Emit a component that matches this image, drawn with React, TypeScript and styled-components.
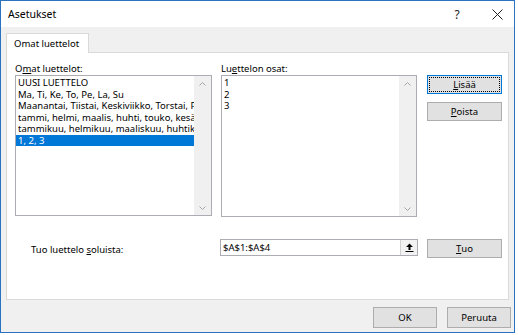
import React from 'react';
import styled, { createGlobalStyle } from 'styled-components';

const GlobalStyle = createGlobalStyle`
	html, body {
		margin: 0;
		padding: 0;
		background: #ffffff;
	}
	body {
		font-family: 'Noto Sans', 'Open Sans', sans-serif;
		font-size: 9.5px;
		color: #000;
	}
`;

const Window = styled.div`
	width: 515px;
	height: 333px;
	box-sizing: border-box;
	border: 1px solid #2b73c0;
	background: #f0f0f0;
	display: flex;
	flex-direction: column;
`;

const TitleBar = styled.div`
	height: 26px;
	background: #fff;
	display: flex;
	align-items: center;
	gap: 6px;
	padding-left: 7px;
	font-size: 10.5px;
`;

const TitleText = styled.div`
	flex: 1;
`;

const TitleButton = styled.div`
	width: 34px;
	height: 26px;
	display: flex;
	align-items: center;
	justify-content: center;
	font-size: 12px;
	color: #222;
`;

const Body = styled.div`
	padding: 6px 5px 0 5px;
	display: flex;
	flex-direction: column;
`;

const TabStrip = styled.div`
	display: flex;
	height: 19px;
	position: relative;
	z-index: 1;
`;

const Tab = styled.div`
	background: #fff;
	border: 1px solid #d9d9d9;
	border-bottom: none;
	padding: 0 7px;
	height: 20px;
	width: 83px;
	box-sizing: border-box;
	display: flex;
	align-items: center;
	white-space: nowrap;
`;

const Panel = styled.div`
	background: #fff;
	border: 1px solid #d9d9d9;
	height: 248px;
	box-sizing: border-box;
	padding: 9px 0 0 8px;
	display: grid;
	grid-template-columns: 197px 196px 75px;
	grid-template-rows: 13px 142px 22px 20px;
	column-gap: 9px;
	align-content: start;
`;

const Label = styled.div<{ $indent?: number }>`
	padding-left: ${(p) => p.$indent || 0}px;
	line-height: 13px;
	white-space: nowrap;
`;

const ListBox = styled.div<{ $h?: number }>`
	border: 1px solid #abadb3;
	box-sizing: border-box;
	height: ${(p) => p.$h || 141}px;
	display: flex;
	overflow: hidden;
`;

const ListItems = styled.div`
	flex: 1;
	padding-top: 1px;
	overflow: hidden;
`;

const ListItem = styled.div<{ $selected?: boolean }>`
	height: 11.5px;
	line-height: 11.5px;
	padding-left: 2px;
	white-space: nowrap;
	overflow: hidden;
	background: ${(p) => (p.$selected ? '#0078d7' : 'transparent')};
	color: ${(p) => (p.$selected ? '#fff' : '#000')};
`;

const ScrollTrack = styled.div`
	width: 17px;
	background: #f0f0f0;
	display: flex;
	flex-direction: column;
	justify-content: space-between;
	align-items: center;
	padding: 6px 0 5px;
	box-sizing: border-box;
`;

const ButtonColumn = styled.div`
	display: flex;
	flex-direction: column;
	gap: 8px;
	padding-left: 1px;
`;

const Button = styled.div<{ $default?: boolean; $w?: number; $h?: number }>`
	width: ${(p) => p.$w || 75}px;
	height: ${(p) => p.$h || 19}px;
	box-sizing: border-box;
	border: 1px solid ${(p) => (p.$default ? '#0078d7' : '#adadad')};
	background: #e1e1e1;
	display: flex;
	align-items: center;
	justify-content: center;
	position: relative;
	${(p) =>
		p.$default &&
		`&::after {
			content: '';
			position: absolute;
			inset: 1px;
			border: 1px dotted #000;
		}`}
`;

const U = styled.span`
	text-decoration: underline;
`;

const ImportRow = styled.div`
	display: contents;
`;

const ImportLabel = styled(Label)`
	align-self: center;
	padding-top: 1px;
`;

const RefInput = styled.div`
	height: 17px;
	border: 1px solid #abadb3;
	box-sizing: border-box;
	display: flex;
	align-items: center;
	margin-left: -1px;
	margin-right: -1px;
	padding-left: 2px;
`;

const RefText = styled.div`
	flex: 1;
	line-height: 15px;
`;

const CollapseButton = styled.div`
	width: 17px;
	height: 15px;
	box-sizing: border-box;
	border-left: 1px solid #d0d0d0;
	background: #f2f2f2;
	display: flex;
	align-items: center;
	justify-content: center;
`;

const Footer = styled.div`
	flex: 1;
	display: flex;
	justify-content: flex-end;
	align-items: flex-start;
	gap: 10px;
	padding: 7px 3px 0 0;
`;

const Chevron = ({ up }: { up?: boolean }) => (
	<svg width="7" height="4" viewBox="0 0 7 4">
		<path d={up ? 'M0.5 3.5 L3.5 0.5 L6.5 3.5' : 'M0.5 0.5 L3.5 3.5 L6.5 0.5'} fill="none" stroke="#a6a6a6" strokeWidth="1" />
	</svg>
);

const CollapseIcon = () => (
	<svg width="9" height="9" viewBox="0 0 9 9">
		<path d="M4.5 0.5 L1 4 H3.5 V7 H5.5 V4 H8 Z" fill="#000" />
		<rect x="0.5" y="8" width="8" height="1" fill="#000" />
	</svg>
);

const lists = [
	'UUSI LUETTELO',
	'Ma, Ti, Ke, To, Pe, La, Su',
	'Maanantai, Tiistai, Keskiviikko, Torstai, Perjantai, Lauantai, Sunnuntai',
	'tammi, helmi, maalis, huhti, touko, kesä, heinä, elo, syys, loka, marras, joulu',
	'tammikuu, helmikuu, maaliskuu, huhtikuu, toukokuu, kesäkuu',
	'1, 2, 3',
];

const entries = ['1', '2', '3'];

export default function App() {
	return (
		<>
			<GlobalStyle />
			<Window>
				<TitleBar>
					<TitleText>Asetukset</TitleText>
					<TitleButton>?</TitleButton>
					<TitleButton>
						<svg width="11" height="11" viewBox="0 0 11 11">
							<path d="M0.5 0.5 L10.5 10.5 M10.5 0.5 L0.5 10.5" stroke="#222" strokeWidth="1" />
						</svg>
					</TitleButton>
				</TitleBar>
				<Body>
					<TabStrip>
						<Tab>Omat luettelot</Tab>
					</TabStrip>
					<Panel>
						<Label>
							O<U>m</U>at luettelot:
						</Label>
						<Label>
							Lu<U>e</U>ttelon osat:
						</Label>
						<div />
						<ListBox>
							<ListItems>
								{lists.map((item, i) => (
									<ListItem key={i} $selected={i === lists.length - 1}>
										{item}
									</ListItem>
								))}
							</ListItems>
							<ScrollTrack>
								<Chevron up />
								<Chevron />
							</ScrollTrack>
						</ListBox>
						<ListBox $h={142}>
							<ListItems>
								{entries.map((item) => (
									<ListItem key={item}>{item}</ListItem>
								))}
							</ListItems>
							<ScrollTrack>
								<Chevron up />
								<Chevron />
							</ScrollTrack>
						</ListBox>
						<ButtonColumn>
							<Button $default>
								<U>L</U>isää
							</Button>
							<Button>
								<U>P</U>oista
							</Button>
						</ButtonColumn>
						<div />
						<div />
						<div />
						<ImportRow>
							<ImportLabel $indent={16}>
								Tuo luettelo <U>s</U>oluista:
							</ImportLabel>
							<RefInput>
								<RefText>$A$1:$A$4</RefText>
								<CollapseButton>
									<CollapseIcon />
								</CollapseButton>
							</RefInput>
							<ButtonColumn>
								<Button $h={19}>
									<U>T</U>uo
								</Button>
							</ButtonColumn>
						</ImportRow>
					</Panel>
				</Body>
				<Footer>
					<Button $w={64} $h={21}>
						OK
					</Button>
					<Button $w={64} $h={21}>
						Peruuta
					</Button>
				</Footer>
			</Window>
		</>
	);
}
